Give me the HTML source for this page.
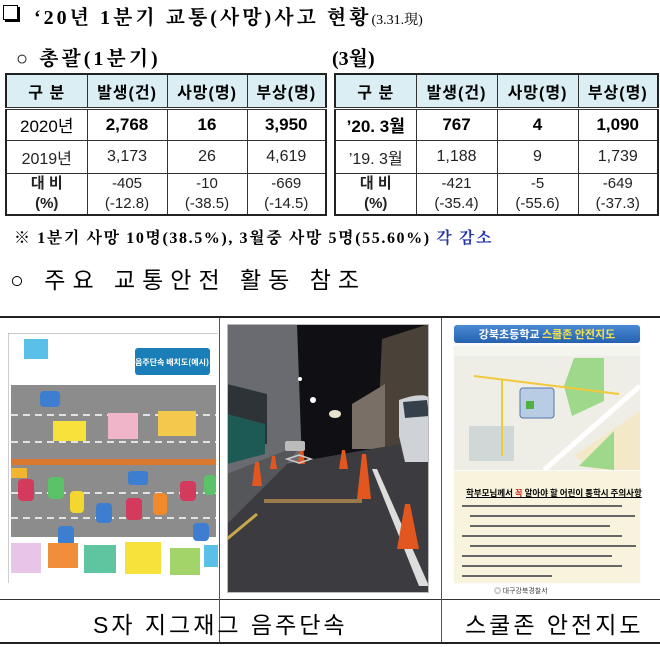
<!DOCTYPE html>
<html><head><meta charset="utf-8">
<style>
*{margin:0;padding:0;box-sizing:border-box}
body{width:660px;height:647px;background:#fff;position:relative;overflow:hidden;font-family:"Liberation Serif","Noto Serif CJK SC","Noto Sans CJK KR",serif;color:#000}
.a{position:absolute;white-space:nowrap}
table{position:absolute;border-collapse:collapse;font-family:"Liberation Sans","Noto Sans CJK KR",sans-serif}
td{border:1px solid #333;text-align:center;font-size:15px;padding:0}
tr.h td{background:#daeef3;font-weight:bold;height:34px;border-bottom:3px double #333;font-size:16px;letter-spacing:1px}
table{border:2px solid #222}
tr.r1 td{height:32px;font-size:17px}
tr.r2 td{height:33px;font-size:16px;color:#222}
tr.r3 td{height:42px;line-height:20px;font-size:15px;color:#222}
.b{font-weight:bold}
.sans{font-family:"Liberation Sans","Noto Sans CJK KR",sans-serif}
</style></head><body>
<div class="a" style="left:3px;top:5px;width:15px;height:15px;border:1.5px solid #000;box-shadow:2px 2px 0 #000"></div>
<div class="a b" style="left:34px;top:1px;font-size:20px;letter-spacing:3px">‘20년 1분기 교통(사망)사고 현황<span style="font-size:14px;font-weight:normal;letter-spacing:0">(3.31.現)</span></div>
<div class="a b" style="left:16px;top:42px;font-size:20px;letter-spacing:3px"><span style="font-weight:normal">○</span> 총괄(1분기)</div>
<div class="a b" style="left:332px;top:42px;font-size:20px">(3월)</div>

<table style="left:5px;top:73px;width:322px">
<tr class="h"><td style="width:81px">구 분</td><td style="width:80px">발생(건)</td><td style="width:80px">사망(명)</td><td>부상(명)</td></tr>
<tr class="r1 b"><td style="font-weight:normal">2020년</td><td class="b">2,768</td><td class="b">16</td><td class="b">3,950</td></tr>
<tr class="r2"><td>2019년</td><td>3,173</td><td>26</td><td>4,619</td></tr>
<tr class="r3"><td class="b">대 비<br>(%)</td><td>-405<br>(-12.8)</td><td>-10<br>(-38.5)</td><td>-669<br>(-14.5)</td></tr>
</table>
<table style="left:334px;top:73px;width:325px">
<tr class="h"><td style="width:81px">구 분</td><td style="width:81px">발생(건)</td><td style="width:81px">사망(명)</td><td>부상(명)</td></tr>
<tr class="r1 b"><td class="b">’20. 3월</td><td class="b">767</td><td class="b">4</td><td class="b">1,090</td></tr>
<tr class="r2"><td>’19. 3월</td><td>1,188</td><td>9</td><td>1,739</td></tr>
<tr class="r3"><td class="b">대 비<br>(%)</td><td>-421<br>(-35.4)</td><td>-5<br>(-55.6)</td><td>-649<br>(-37.3)</td></tr>
</table>

<div class="a b" style="left:14px;top:225px;font-size:16px;letter-spacing:1.6px">※ 1분기 사망 10명(38.5%), 3월중 사망 5명(55.60%) <span style="color:#2233aa">각 감소</span></div>
<div class="a sans" style="left:10px;top:261px;font-size:23px;letter-spacing:7px">○ 주요 교통안전 활동 참조</div>

<div class="a" style="left:0;top:316px;width:660px;height:2px;background:#222"></div>
<div class="a" style="left:0;top:599px;width:660px;height:1px;background:#333"></div>
<div class="a" style="left:0;top:642px;width:660px;height:2px;background:#222"></div>
<div class="a" style="left:219px;top:318px;width:1px;height:324px;background:#555"></div>
<div class="a" style="left:441px;top:318px;width:1px;height:324px;background:#555"></div>

<!-- diagram -->
<svg class="a" style="left:8px;top:333px" width="210" height="250" viewBox="0 0 210 250">
<rect x="0" y="0" width="210" height="250" fill="#fff"/>
<line x1="0" y1="0" x2="210" y2="0" stroke="#99a" stroke-width="1"/>
<line x1="0" y1="0" x2="0" y2="250" stroke="#99a" stroke-width="1"/>
<rect x="127" y="15" width="75" height="27" rx="3" fill="#1a7fb8"/>
<text x="164" y="32" font-size="8" fill="#fff" text-anchor="middle" font-family="Noto Sans CJK KR,sans-serif" font-weight="bold">음주단속 배치도(예시)</text>
<rect x="16" y="6" width="24" height="20" fill="#5bc0e8"/>
<rect x="3" y="52" width="205" height="152" fill="#8c8c8c"/>
<g stroke="#fff" stroke-width="1.5" stroke-dasharray="7,5"><line x1="3" y1="82" x2="208" y2="82"/><line x1="3" y1="109" x2="208" y2="109"/><line x1="3" y1="160" x2="208" y2="160"/><line x1="3" y1="185" x2="208" y2="185"/></g>
<rect x="3" y="126" width="205" height="6" fill="#d9782e"/>
<rect x="45" y="88" width="33" height="20" fill="#f6e23a"/>
<rect x="100" y="80" width="30" height="26" fill="#f0b5c8"/>
<rect x="150" y="78" width="38" height="25" fill="#f2c94c"/>
<g><rect x="10" y="146" width="16" height="22" rx="4" fill="#d33a5c"/><rect x="40" y="144" width="16" height="22" rx="4" fill="#5cc26a"/><rect x="62" y="158" width="14" height="22" rx="4" fill="#f3d62e"/><rect x="88" y="170" width="16" height="20" rx="4" fill="#3e7ed1"/><rect x="118" y="165" width="16" height="22" rx="4" fill="#d33a5c"/><rect x="145" y="160" width="14" height="22" rx="4" fill="#f08a2a"/><rect x="172" y="148" width="16" height="20" rx="4" fill="#d33a5c"/><rect x="196" y="142" width="12" height="20" rx="4" fill="#5cc26a"/><rect x="32" y="58" width="20" height="16" rx="4" fill="#3e7ed1"/><rect x="120" y="138" width="20" height="14" rx="3" fill="#3e7ed1"/><rect x="50" y="193" width="16" height="20" rx="4" fill="#3e7ed1"/><rect x="185" y="190" width="16" height="18" rx="4" fill="#3e7ed1"/></g>
<rect x="3" y="135" width="16" height="10" fill="#f2b531"/>
<rect x="3" y="210" width="30" height="30" fill="#e7c4e8"/>
<rect x="40" y="210" width="30" height="25" fill="#f08e3a"/>
<rect x="76" y="212" width="32" height="28" fill="#5fc4a0"/>
<rect x="117" y="209" width="36" height="32" fill="#f6e23a"/>
<rect x="162" y="215" width="30" height="27" fill="#a3d46a"/>
<rect x="196" y="212" width="14" height="22" fill="#5bc0e8"/>
</svg>

<!-- photo -->
<svg class="a" style="left:227px;top:324px" width="202" height="269" viewBox="0 0 202 269">
<rect width="202" height="269" fill="#0f0f14"/>
<polygon points="0,0 70,0 75,140 0,150" fill="#6a6b70"/>
<polygon points="0,60 40,70 40,120 0,125" fill="#2e3338"/>
<polygon points="0,90 38,100 38,130 0,140" fill="#1e5a55"/>
<polygon points="155,15 202,0 202,130 150,125" fill="#4a4238"/>
<polygon points="125,80 158,60 158,125 125,125" fill="#7a6f66"/>
<polygon points="0,150 202,115 202,269 0,269" fill="#3c3c40"/>
<polygon points="0,150 75,120 60,140 0,200" fill="#55565a"/>
<line x1="30" y1="190" x2="0" y2="215" stroke="#c9a64a" stroke-width="3"/>
<polygon points="145,145 150,145 202,262 192,262" fill="#ddd"/>
<path d="M172 76 C188 70 200 70 202 74 L202 138 L178 138 L172 112 Z" fill="#cfd2d6"/>
<path d="M176 78 L200 76 L202 92 L178 94 Z" fill="#34404c"/>
<ellipse cx="108" cy="90" rx="6" ry="4" fill="#fffbe0" opacity=".9"/>
<g fill="#e2561f"><polygon points="28,138 32,138 35,162 25,162"/><polygon points="73,123 76,123 78,140 71,140"/><polygon points="115,126 118,126 121,145 112,145"/><polygon points="135,130 139,130 144,175 130,175"/><polygon points="178,180 183,180 192,225 170,225"/><polygon points="45,132 48,132 50,145 43,145"/></g>
<rect x="37" y="175" width="98" height="4" fill="#9a7a4a"/>
<polygon points="60,135 72,131 84,135 72,139" fill="none" stroke="#ccc" stroke-width="1.5"/>
<rect x="58" y="117" width="20" height="10" rx="2" fill="#bbb"/>
<circle cx="86" cy="76" r="3" fill="#fff"/>
<circle cx="73" cy="55" r="2" fill="#fff"/>
</svg>
<div class="a" style="left:227px;top:324px;width:202px;height:269px;border:1px solid #bbb"></div>

<!-- map -->
<div class="a" style="left:453px;top:324px;width:188px;height:260px;background:#fbfbfb"></div>
<div class="a" style="left:454px;top:325px;width:186px;height:18px;background:linear-gradient(#4a8ad4,#2561b0);border-radius:3px;color:#fff;font-family:'Noto Sans CJK KR',sans-serif;font-weight:bold;font-size:11px;text-align:center;line-height:18px">강북초등학교 <span style="color:#f6e34a">스쿨존 안전지도</span></div>
<svg class="a" style="left:454px;top:346px" width="186" height="124" viewBox="0 0 186 124">
<rect width="186" height="124" fill="#eeede6"/>
<rect width="186" height="10" fill="#f4f4ee"/>
<polygon points="120,12 150,12 150,55 118,70 110,40" fill="#9ed88a"/>
<polygon points="120,110 186,65 186,124 140,124" fill="#f3e9c9"/>
<polygon points="125,120 160,85 160,124" fill="#9ed88a"/>
<rect x="15" y="80" width="45" height="35" fill="#cfd8d6"/>
<polyline points="20,30 165,48" fill="none" stroke="#f2c93a" stroke-width="2"/>
<polyline points="48,33 48,110" fill="none" stroke="#f2c93a" stroke-width="2"/>
<rect x="66" y="42" width="34" height="30" rx="3" fill="#b8cce4" stroke="#5577aa"/>
<rect x="72" y="55" width="8" height="8" fill="#50b040"/>
<line x1="90" y1="124" x2="186" y2="40" stroke="#fff" stroke-width="5"/>
</svg>
<div class="a" style="left:454px;top:471px;width:186px;height:112px;background:#f8f3dc"></div>
<div class="a b" style="left:466px;top:487px;font-size:8.5px;font-family:'Noto Sans CJK KR',sans-serif;text-decoration:underline">학부모님께서 <span style="color:#c22">꼭</span> 알아야 할 어린이 통학시 주의사항</div>
<svg class="a" style="left:460px;top:502px" width="178" height="78">
<g fill="#666"><rect x="2" y="3" width="160" height="2"/><rect x="10" y="13" width="165" height="2"/><rect x="10" y="23" width="140" height="2"/><rect x="2" y="33" width="160" height="2"/><rect x="10" y="43" width="166" height="2"/><rect x="2" y="53" width="150" height="2"/><rect x="2" y="63" width="160" height="2"/><rect x="2" y="73" width="90" height="2"/></g>
</svg>
<div class="a" style="left:494px;top:586px;font-size:7px;color:#444;font-family:'Noto Sans CJK KR',sans-serif">◎ 대구강북경찰서</div>

<div class="a sans" style="left:93px;top:606px;font-size:23px;letter-spacing:3px">S자 지그재그 음주단속</div>
<div class="a sans" style="left:465px;top:606px;font-size:23px;letter-spacing:3px">스쿨존 안전지도</div>
</body></html>
